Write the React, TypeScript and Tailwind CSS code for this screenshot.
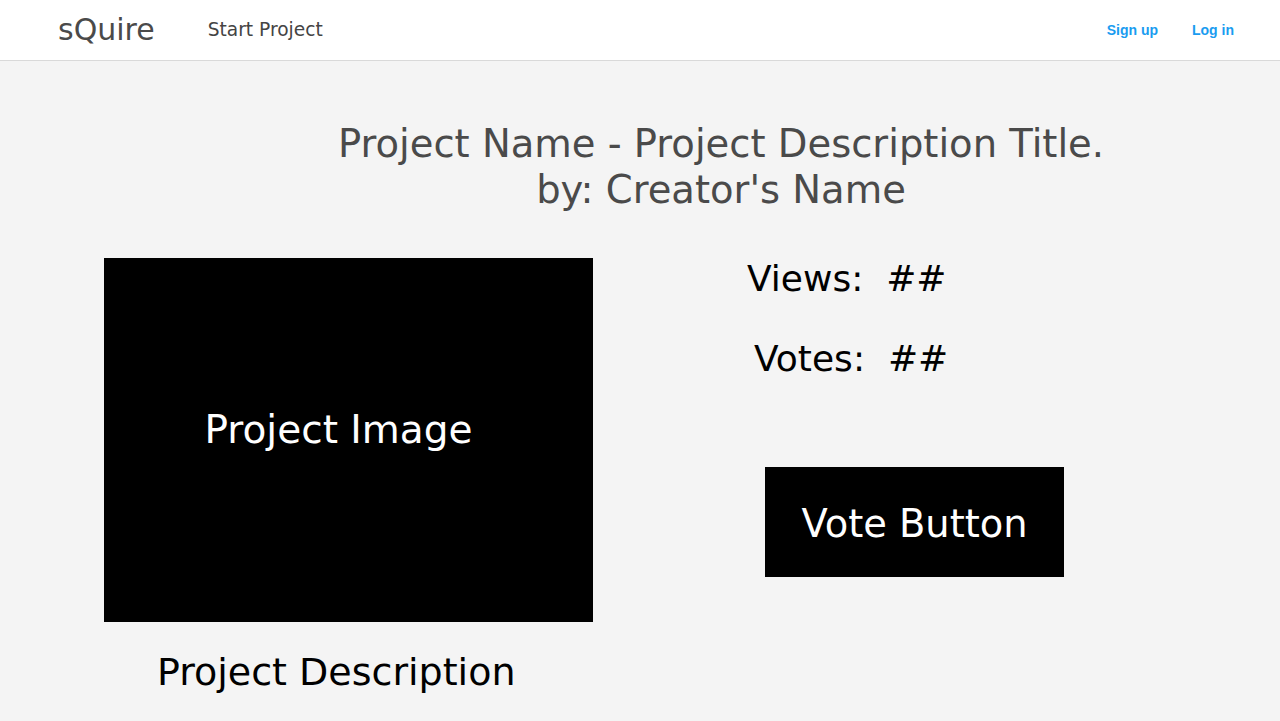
export default function App() {
  const dv = { fontFamily: '"DejaVu Sans", Verdana, sans-serif' };
  return (
    <div className="min-h-[721px] w-full bg-[#f4f4f4]" style={dv}>
      <header className="flex h-[61px] items-center border-b border-[#d9d9d9] bg-white">
        <div className="ml-[58px] text-[30px] leading-none text-[#4a4a4a]">sQuire</div>
        <div className="ml-[53px] text-[18.6px] text-[#444]">Start Project</div>
        <div className="ml-auto mr-[46px] flex gap-[34px] text-[14px] font-bold text-[#1a9cf0]" style={{ fontFamily: '"Liberation Sans", Arial, sans-serif' }}>
          <span>Sign up</span>
          <span>Log in</span>
        </div>
      </header>
      <div className="pl-[162px] pt-[60px] text-center text-[38.5px] leading-[46px] text-[#4a4a4a]">
        <div>Project Name - Project Description Title.</div>
        <div>by: Creator's Name</div>
      </div>
      <div className="mt-[45px] flex">
        <div className="ml-[104px] flex w-[489px] flex-col">
          <div className="flex h-[364px] items-center justify-center bg-black pb-[20px] pr-[20px] text-[39px] text-white">Project Image</div>
          <div className="mt-[28px] pl-[53px] text-[38px] leading-[44px] text-black">Project Description</div>
        </div>
        <div className="ml-[154px] flex flex-col">
          <div className="mt-[1px] text-[36px] leading-[40px] text-black">Views:&nbsp; ##</div>
          <div className="mt-[40px] ml-[7px] text-[36px] leading-[40px] text-black">Votes:&nbsp; ##</div>
          <div className="ml-[18px] mt-[88px] flex h-[110px] w-[299px] items-center justify-center bg-black pt-[3px] text-[38.4px] text-white">Vote Button</div>
        </div>
      </div>
    </div>
  );
}
